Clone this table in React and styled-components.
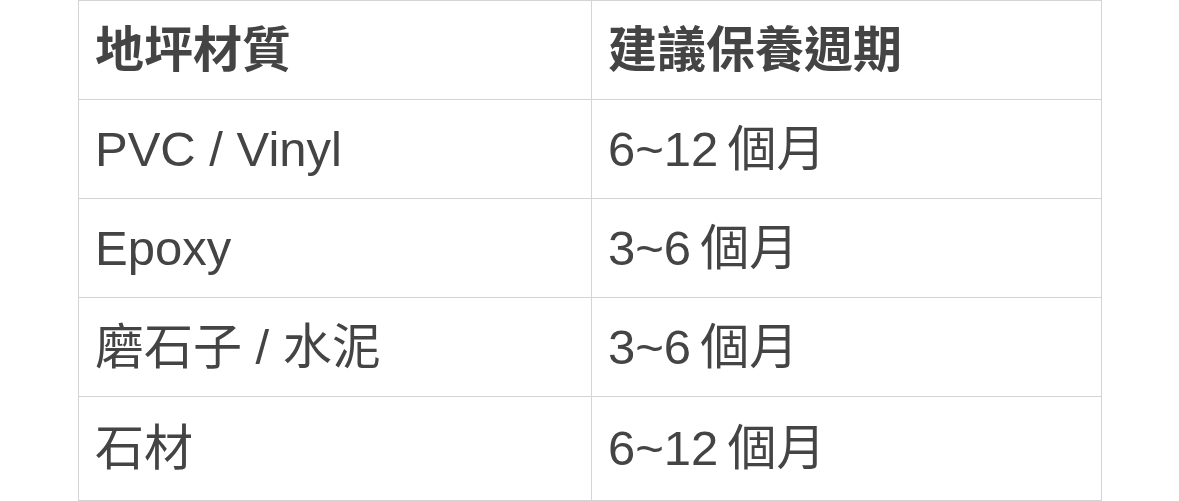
import React from "react";
import styled, { createGlobalStyle } from "styled-components";

const GlobalStyle = createGlobalStyle`
  body {
    margin: 0;
    background-color: #ffffff;
    font-family: "Liberation Sans", "Noto Sans CJK TC", sans-serif;
  }
`;

const Page = styled.div`
  width: 1179px;
  height: 501px;
  padding-left: 78px;
  box-sizing: border-box;
  overflow: hidden;
`;

const Table = styled.table`
  width: 1023px;
  border-collapse: collapse;
  table-layout: fixed;
  border: 1px solid #d4d4d4;
`;

const Col = styled.col`
  width: ${({ $w }) => $w};
`;

const Row = styled.tr`
  height: ${({ $tall }) => ($tall ? "104px" : "99px")};
`;

const Cell = styled.td`
  border: 1px solid #d4d4d4;
  padding: 0 16px;
  font-size: 49px;
  font-weight: ${({ $head }) => ($head ? 700 : 400)};
  color: #444444;
  vertical-align: middle;
  white-space: nowrap;
  line-height: 1;
`;

const Unit = styled.span`
  margin-left: 9px;
`;

const rows = [
  ["PVC / Vinyl", "6~12"],
  ["Epoxy", "3~6"],
  ["磨石子 / 水泥", "3~6"],
  ["石材", "6~12"],
];

const App = () => {
  return (
    <>
      <GlobalStyle />
      <Page>
        <Table>
          <colgroup>
            <Col $w="513px" />
            <Col $w="510px" />
          </colgroup>
          <tbody>
            <Row>
              <Cell $head>地坪材質</Cell>
              <Cell $head>建議保養週期</Cell>
            </Row>
            {rows.map(([material, months], i) => (
              <Row key={material} $tall={i === rows.length - 1}>
                <Cell>{material}</Cell>
                <Cell>
                  {months}
                  <Unit>個月</Unit>
                </Cell>
              </Row>
            ))}
          </tbody>
        </Table>
      </Page>
    </>
  );
};

export default App;
